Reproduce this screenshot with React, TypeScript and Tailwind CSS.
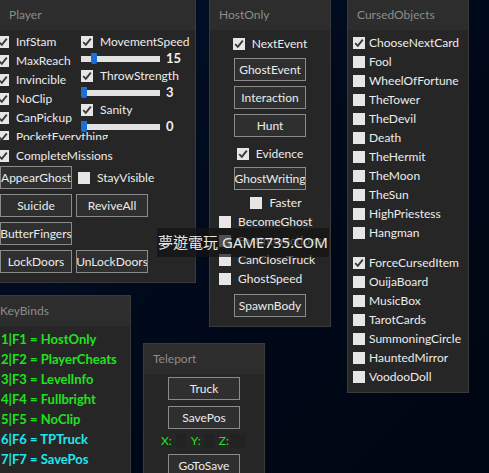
import React from "react";

const FONT = { fontFamily: 'Lato, "Noto Sans", sans-serif' };

function Check({ checked = false }: { checked?: boolean }) {
  return (
    <span className="w-[12px] h-[12px] flex-shrink-0 bg-[#e6e6e6] flex items-center justify-center">
      {checked && (
        <svg className="w-[10px] h-[10px]" viewBox="0 0 10 10" fill="none">
          <path d="M1.2 5.2 L3.8 7.8 L8.8 1.6" stroke="#3a3a3a" strokeWidth={1.9} />
        </svg>
      )}
    </span>
  );
}

function Toggle({
  label,
  checked = false,
  tight = false,
}: {
  label: string;
  checked?: boolean;
  tight?: boolean;
}) {
  return (
    <div
      className={`flex items-center ${tight ? "gap-[4px]" : "gap-[7px]"} h-[19px] text-[12px] text-[#ececec] whitespace-nowrap`}
    >
      <Check checked={checked} />
      <span>{label}</span>
    </div>
  );
}

function Btn({ label }: { label: string }) {
  return (
    <div className="w-[72px] h-[23px] flex items-center justify-center border border-[#8a8a8a] bg-[#2f2f2f] text-[12px] text-[#ececec] whitespace-nowrap overflow-hidden">
      {label}
    </div>
  );
}

function Slider({ pos, value }: { pos: number; value: string }) {
  return (
    <div className="flex items-center h-[17px] gap-[6px]">
      <div className="relative w-[79px] h-[6px] bg-[#e2e2e2]">
        <span
          className="absolute top-[-3px] w-[6px] h-[11px] bg-[#1b6fd6] rounded-b-[2px]"
          style={{ left: pos }}
        />
      </div>
      <span className="text-[13px] font-bold text-[#f0f0f0]">{value}</span>
    </div>
  );
}

function Panel({
  title,
  className,
  children,
}: {
  title: string;
  className: string;
  children: React.ReactNode;
}) {
  return (
    <div className={`absolute bg-[#262626] border border-[#3a3a3a] ${className}`}>
      <div className="h-[30px] bg-[#2d2d2d] flex items-center pl-[9px] text-[12px] text-[#8c8c8c]">
        {title}
      </div>
      {children}
    </div>
  );
}

export default function App() {
  const cursedTop = [
    ["ChooseNextCard", true],
    ["Fool", false],
    ["WheelOfFortune", false],
    ["TheTower", false],
    ["TheDevil", false],
    ["Death", false],
    ["TheHermit", false],
    ["TheMoon", false],
    ["TheSun", false],
    ["HighPriestess", false],
    ["Hangman", false],
  ] as const;
  const cursedBottom = [
    ["ForceCursedItem", true],
    ["OuijaBoard", false],
    ["MusicBox", false],
    ["TarotCards", false],
    ["SummoningCircle", false],
    ["HauntedMirror", false],
    ["VoodooDoll", false],
  ] as const;
  const binds = [
    ["1|F1 = HostOnly", "#1fe21f"],
    ["2|F2 = PlayerCheats", "#1fe21f"],
    ["3|F3 = LevelInfo", "#1fe21f"],
    ["4|F4 = Fullbright", "#1fe21f"],
    ["5|F5 = NoClip", "#1fe21f"],
    ["6|F6 = TPTruck", "#1fe6ee"],
    ["7|F7 = SavePos", "#1fe6ee"],
  ];

  return (
    <div
      className="relative w-[489px] h-[473px] overflow-hidden bg-[linear-gradient(135deg,#04102a,#000818_60%,#000612)]"
      style={FONT}
    >
      {/* Player */}
      <Panel title="Player" className="left-[-1px] top-[-1px] w-[197px] h-[284px]">
        <div className="flex pt-[2px]">
          <div className="flex flex-col ml-[-3px] w-[84px]">
            <Toggle label="InfStam" checked />
            <Toggle label="MaxReach" checked />
            <Toggle label="Invincible" checked />
            <Toggle label="NoClip" checked />
            <Toggle label="CanPickup" checked />
            <div className="h-[19px]">
              <div className="h-[13px] w-max overflow-hidden">
                <Toggle label="PocketEverything" checked />
              </div>
            </div>
          </div>
          <div className="flex flex-col pt-[1px]">
            <div className="h-[17px] flex items-center">
              <Toggle label="MovementSpeed" checked />
            </div>
            <Slider pos={10} value="15" />
            <div className="h-[17px] flex items-center">
              <Toggle label="ThrowStrength" checked />
            </div>
            <Slider pos={0} value="3" />
            <div className="h-[17px] flex items-center">
              <Toggle label="Sanity" checked />
            </div>
            <Slider pos={0} value="0" />
          </div>
        </div>
        <div className="ml-[-3px]">
          <Toggle label="CompleteMissions" checked />
        </div>
        <div className="flex flex-col gap-[5px] mt-[1px]">
          <div className="flex items-center gap-[6px]">
            <Btn label="AppearGhost" />
            <Toggle label="StayVisible" />
          </div>
          <div className="flex gap-[4px]">
            <Btn label="Suicide" />
            <Btn label="ReviveAll" />
          </div>
          <div className="flex gap-[4px]">
            <Btn label="ButterFingers" />
          </div>
          <div className="flex gap-[4px]">
            <Btn label="LockDoors" />
            <Btn label="UnLockDoors" />
          </div>
        </div>
      </Panel>

      {/* HostOnly */}
      <Panel title="HostOnly" className="left-[209px] top-[-1px] w-[122px] h-[328px]">
        <div className="flex flex-col items-center pt-[4px]">
          <Toggle label="NextEvent" checked />
          <div className="flex flex-col gap-[5px] mt-[5px]">
            <Btn label="GhostEvent" />
            <Btn label="Interaction" />
            <Btn label="Hunt" />
          </div>
          <div className="mt-[7px]">
            <Toggle label="Evidence" checked />
          </div>
          <div className="mt-[4px]">
            <Btn label="GhostWriting" />
          </div>
          <div className="mt-[3px] pl-[12px]">
            <Toggle label="Faster" />
          </div>
        </div>
        <div className="flex flex-col pl-[9px]">
          <Toggle label="BecomeGhost" />
          <Toggle label="FastInteractions" />
          <Toggle label="CanCloseTruck" />
          <Toggle label="GhostSpeed" />
        </div>
        <div className="flex justify-center mt-[6px]">
          <Btn label="SpawnBody" />
        </div>
      </Panel>

      {/* CursedObjects */}
      <Panel title="CursedObjects" className="left-[347px] top-[-1px] w-[122px] h-[394px]">
        <div className="flex flex-col pl-[5px] pt-[3px]">
          {cursedTop.map(([l, c]) => (
            <Toggle key={l} label={l} checked={c} tight />
          ))}
          <div className="h-[11px]" />
          {cursedBottom.map(([l, c]) => (
            <Toggle key={l} label={l} checked={c} tight />
          ))}
        </div>
      </Panel>

      {/* KeyBinds */}
      <Panel title="KeyBinds" className="left-[-10px] top-[295px] w-[141px] h-[200px]">
        <div className="flex flex-col pl-[10px] pt-[4px]">
          {binds.map(([t, c]) => (
            <div key={t} className="h-[20px] flex items-center text-[13px] font-bold whitespace-nowrap" style={{ color: c }}>
              {t}
            </div>
          ))}
        </div>
      </Panel>

      {/* Teleport */}
      <Panel title="Teleport" className="left-[143px] top-[343px] w-[122px] h-[150px]">
        <div className="flex flex-col items-center pt-[3px]">
          <Btn label="Truck" />
          <div className="mt-[6px]">
            <Btn label="SavePos" />
          </div>
          <div className="flex items-center h-[20px] mt-[2px] text-[12px] text-[#1fe21f] ml-[-2px]">
            <span>X:</span>
            <span className="w-[10px] h-[14px] bg-[#222222] ml-[4px] mr-[5px]" />
            <span>Y:</span>
            <span className="w-[11px] h-[14px] bg-[#222222] ml-[3px] mr-[4px]" />
            <span>Z:</span>
            <span className="w-[15px] h-[14px] bg-[#222222] ml-[1px]" />
          </div>
          <div className="mt-[3px]">
            <Btn label="GoToSave" />
          </div>
        </div>
      </Panel>

      {/* watermark */}
      <div
        className="absolute left-[157px] top-[228px] w-[172px] h-[29px] bg-[rgba(20,20,20,0.72)] flex items-center justify-center text-[15px] text-[#e8e8e8] whitespace-nowrap"
        style={{ fontFamily: '"Noto Sans", "Noto Sans CJK TC", sans-serif' }}
      >
        夢遊電玩 GAME735.COM
      </div>
    </div>
  );
}
